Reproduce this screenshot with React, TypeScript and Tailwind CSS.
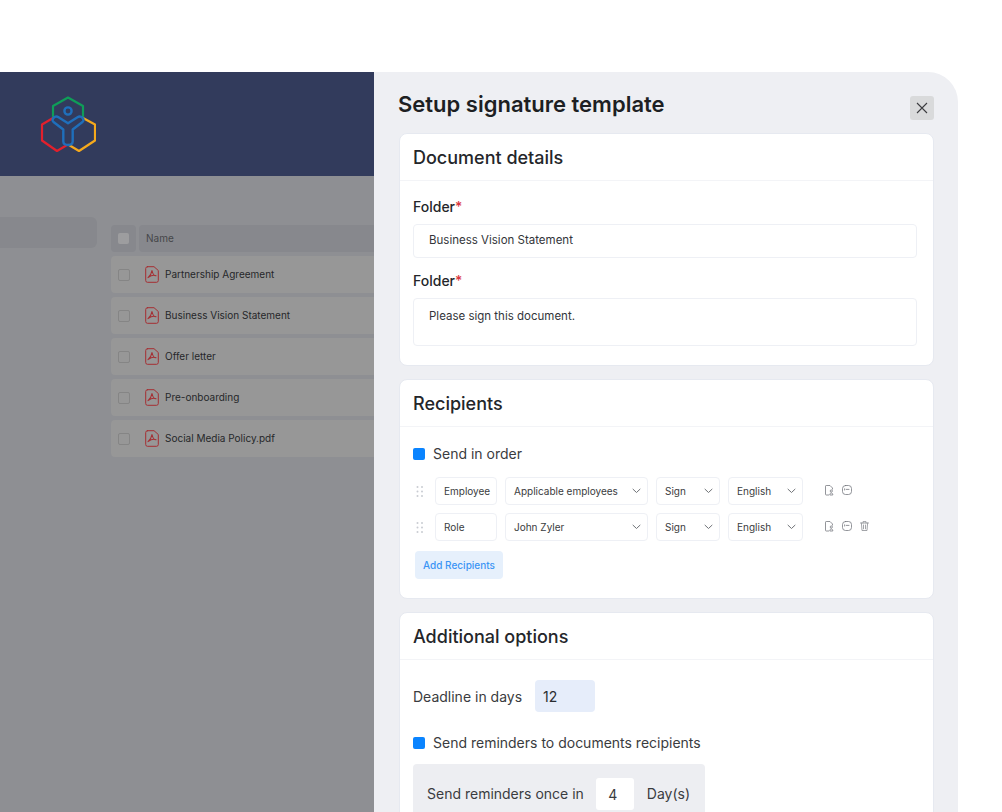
import React from 'react';

const docs = ['Partnership Agreement', 'Business Vision Statement', 'Offer letter', 'Pre-onboarding', 'Social Media Policy.pdf'];

function Logo() {
  return (
    <svg width="56" height="56" viewBox="0 0 56 56" fill="none" strokeWidth="2.2" strokeLinejoin="round" strokeLinecap="round">
      <path d="M13 23V10L28 1.5 43 10V23" stroke="#0f9d58" />
      <path d="M13 22 2 28.5V44.5L17 55 27 49" stroke="#e2202c" />
      <path d="M43 22 55 28.5V44.5L39 55 29 49" stroke="#f5a91c" />
      <circle cx="28" cy="15" r="3.6" stroke="#1f6fbb" strokeWidth="2.4" />
      <path d="M28 27.3 18.5 21.2Q16.5 20 14.5 21 11 23.5 13.5 26L23.3 33.5V45.5Q23.5 49 28 49 32.5 49 32.7 45.5V33.5L42.5 26Q45 23.5 41.5 21 39.5 20 37.5 21.2Z" stroke="#1f6fbb" strokeWidth="2.4" />
    </svg>
  );
}

function PdfIcon() {
  return (
    <svg width="14" height="17" viewBox="0 0 14 17" fill="none" stroke="#a52f33" strokeLinecap="round" strokeLinejoin="round" className="shrink-0">
      <path d="M2.5.7H9L13.3 4.5V14.5Q13.3 16.3 11.5 16.3H2.5Q.7 16.3.7 14.5V2.5Q.7.7 2.5.7Z" strokeWidth="1" />
      <path d="M7 4.5C6.6 7 5.5 9.6 3 11.6 5 10.2 8.8 8.6 11 9.8 9 10 7.8 8 7 4.5Z" strokeWidth="1.1" />
    </svg>
  );
}

function Chevron() {
  return (
    <svg width="9" height="6" viewBox="0 0 9 6" fill="none" stroke="#6f7277" strokeWidth="1" strokeLinecap="round" strokeLinejoin="round">
      <path d="M1 1.2 4.5 4.5 8 1.2" />
    </svg>
  );
}

function Grip() {
  return (
    <svg width="8" height="11" viewBox="0 0 8 11" fill="#c9ccd2">
      {[1, 5.5, 10].map((y) => (
        <React.Fragment key={y}>
          <circle cx="1.5" cy={y} r="1" />
          <circle cx="6" cy={y} r="1" />
        </React.Fragment>
      ))}
    </svg>
  );
}

function DocUserIcon() {
  return (
    <svg width="9" height="11" viewBox="0 0 9 11" fill="none" stroke="#777a80" strokeWidth="0.8" strokeLinejoin="round">
      <path d="M4 10H1.2Q.5 10 .5 9.3V1.2Q.5.5 1.2.5H5L7.5 3V4.5" />
      <circle cx="6.3" cy="6" r="1.1" />
      <path d="M4.8 10C4.8 8.6 5.4 8 6.3 8S7.8 8.6 7.8 10Z" />
    </svg>
  );
}

function FaceIcon() {
  return (
    <svg width="10" height="10" viewBox="0 0 10 10" fill="none" stroke="#777a80" strokeWidth="0.8" strokeLinecap="round">
      <rect x="0.5" y="0.5" width="9" height="9" rx="3" />
      <path d="M2.6 3.8V5M4.2 4.4H7" />
    </svg>
  );
}

function TrashIcon() {
  return (
    <svg width="9" height="10" viewBox="0 0 9 10" fill="none" stroke="#8b8e93" strokeWidth="0.8" strokeLinecap="round" strokeLinejoin="round">
      <path d="M.5 2H8.500M3 2V.6H6V2M1.400 2 2 9.500H7L7.600 2M3.500 4V7.800M5.500 4V7.800" />
    </svg>
  );
}

function Checkbox() {
  return <span className="h-3 w-3 shrink-0 rounded-[2px] bg-[#0a84ff]" />;
}

function Field({ className, children }: { className: string; children: React.ReactNode }) {
  return (
    <div className={`flex h-7 items-center justify-between rounded-[4px] border border-[#eef0f5] bg-white text-[10px] text-[#3a3c40] ${className}`}>
      {children}
    </div>
  );
}

function RecipientRow({ type, name, trash }: { type: string; name: string; trash?: boolean }) {
  return (
    <div className="flex items-center">
      <div className="flex w-[22px] pl-[3px]">
        <Grip />
      </div>
      <Field className="w-[62px] pl-2">{type}</Field>
      <Field className="ml-2 w-[143px] pl-2 pr-[6px]">
        {name}
        <Chevron />
      </Field>
      <Field className="ml-2 w-16 pl-2 pr-[6px]">
        Sign
        <Chevron />
      </Field>
      <Field className="ml-2 w-[75px] pl-2 pr-[6px]">
        English
        <Chevron />
      </Field>
      <div className="ml-[22px] flex items-center gap-2 pb-[2px]">
        <DocUserIcon />
        <FaceIcon />
        {trash && <TrashIcon />}
      </div>
    </div>
  );
}

function Card({ title, children }: { title: string; children: React.ReactNode }) {
  return (
    <section className="mb-[13px] w-[535px] rounded-lg border border-[#e6e9f0] bg-white">
      <h2 className="flex h-[47px] items-center border-b border-[#f3f4f7] px-[13px] text-[18px] font-medium text-[#24262a]">{title}</h2>
      {children}
    </section>
  );
}

export default function App() {
  return (
    <div className="h-[812px] overflow-hidden bg-white pt-[72px] font-['Inter',sans-serif]">
      <div className="flex h-[740px] w-[958px] overflow-hidden rounded-tr-[30px]">
        {/* dimmed page behind the panel */}
        <div className="w-[374px] shrink-0 overflow-hidden bg-[#8e8f93]">
          <div className="flex h-[104px] items-center bg-[#323b5c] pl-10 pb-[1px]">
            <Logo />
          </div>
          <div className="flex pt-[41px]">
            <div className="h-[31px] w-[97px] shrink-0 rounded-r-md bg-[#87888d]" />
            <div className="ml-[14px] mt-2 flex-1">
              <div className="flex h-[27px] gap-[3px]">
                <div className="flex w-[25px] items-center justify-center rounded bg-[#87888d]">
                  <span className="h-[11px] w-[11px] rounded-[2px] bg-[#9d9d9f]" />
                </div>
                <div className="flex flex-1 items-center rounded-l bg-[#87888d] pl-[7px] text-[10px] text-[#454649]">Name</div>
              </div>
              <div className="mt-1 flex flex-col gap-1">
                {docs.map((d) => (
                  <div key={d} className="flex h-[37px] items-center rounded-l-sm bg-[#979797] pl-[7px] text-[10px] text-[#26272a]">
                    <span className="h-3 w-3 rounded-[2px] border border-[#858585]" />
                    <span className="ml-[15px] mr-[6px]">
                      <PdfIcon />
                    </span>
                    {d}
                  </div>
                ))}
              </div>
            </div>
          </div>
        </div>

        {/* signature panel */}
        <div className="flex-1 bg-[#eeeff3] pl-6">
          <div className="flex h-[61px] items-start justify-between pr-6 pt-5">
            <h1 className="text-[22px] leading-6 font-semibold text-[#1d1f23]">Setup signature template</h1>
            <button className="mt-[4px] flex h-6 w-6 items-center justify-center rounded-[3px] bg-[#d9dadb]">
              <svg width="12" height="12" viewBox="0 0 12 12" stroke="#3c3d40" strokeWidth="1.1">
                <path d="M1 1 11 11M11 1 1 11" />
              </svg>
            </button>
          </div>
          <div className="pl-[1px]">
            <Card title="Document details">
              <div className="px-[13px] pb-[19px] pt-[17px] text-[14px] text-[#24262a]">
                <label className="block font-medium leading-[18px]">
                  Folder<span className="text-[#d9363e]">*</span>
                </label>
                <div className="mt-2 flex h-[34px] w-[504px] items-center rounded-[4px] border border-[#eef0f5] px-[15px] text-[11.500px] text-[#33353a]">Business Vision Statement</div>
                <label className="mt-[14px] block font-medium leading-[18px]">
                  Folder<span className="text-[#d9363e]">*</span>
                </label>
                <div className="mt-2 h-12 w-[504px] rounded-[4px] border border-[#eef0f5] px-[15px] pt-[9px] text-[11.500px] text-[#33353a]">Please sign this document.</div>
              </div>
            </Card>
            <Card title="Recipients">
              <div className="px-[13px] pb-[19px] pt-[18px]">
                <div className="flex items-center gap-2 text-[14px] leading-[18px] text-[#3a3c40]">
                  <Checkbox />
                  Send in order
                </div>
                <div className="mt-[14px] flex flex-col gap-2">
                  <RecipientRow type="Employee" name="Applicable employees" />
                  <RecipientRow type="Role" name="John Zyler" trash />
                </div>
                <button className="ml-[2px] mt-[10px] flex h-7 w-[88px] items-center justify-center rounded-[4px] bg-[#e6f0fc] text-[10px] font-medium text-[#3b95f5]">Add Recipients</button>
              </div>
            </Card>
            <Card title="Additional options">
              <div className="px-[13px] pt-5 text-[14px] text-[#3a3c40]">
                <div className="flex items-center">
                  Deadline in days
                  <div className="ml-[13px] flex h-8 w-[60px] items-center rounded-[4px] bg-[#e6edfa] pl-2 text-[#2a2c30]">12</div>
                </div>
                <div className="mt-[22px] flex items-center gap-2 leading-[18px]">
                  <Checkbox />
                  Send reminders to documents recipients
                </div>
                <div className="mt-3 flex h-[70px] w-[292px] items-start rounded-[4px] bg-[#edeef2] pl-[14px] pt-[14px]">
                  <span className="leading-[32px]">Send reminders once in</span>
                  <div className="ml-3 flex h-8 w-[38px] items-center justify-center rounded-[3px] bg-white pr-1">4</div>
                  <span className="ml-[13px] leading-[32px]">Day(s)</span>
                </div>
              </div>
            </Card>
          </div>
        </div>
      </div>
    </div>
  );
}
